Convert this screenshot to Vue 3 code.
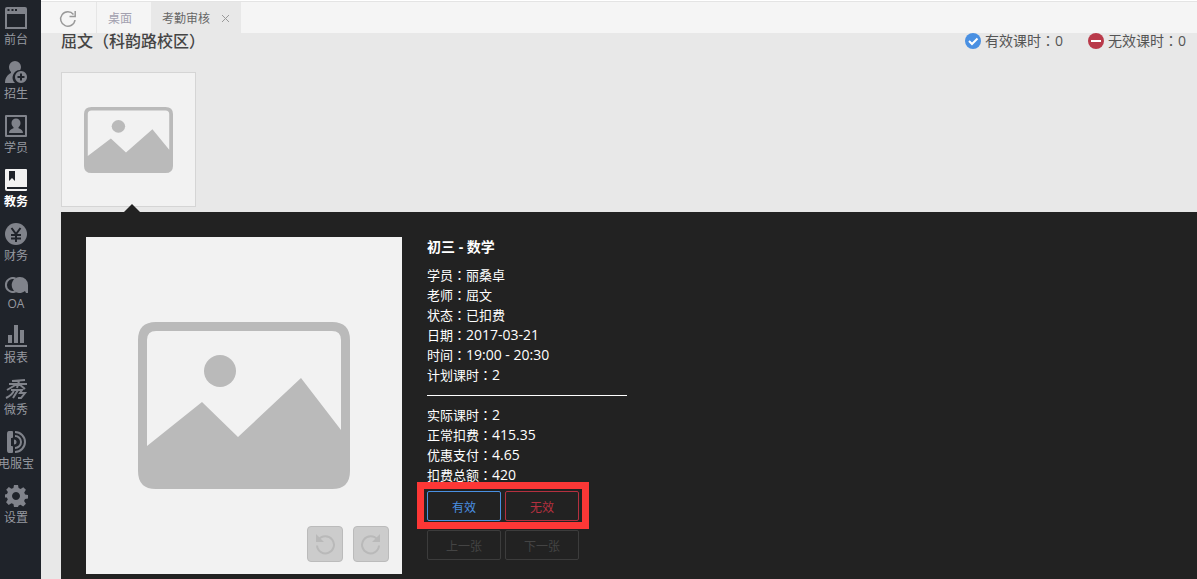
<script setup>
const nav = [
  { name: '前台', icon: 'desk', h: 22 },
  { name: '招生', icon: 'recruit', h: 22 },
  { name: '学员', icon: 'student', h: 22 },
  { name: '教务', icon: 'book', h: 22, active: true },
  { name: '财务', icon: 'money', h: 22 },
  { name: 'OA', icon: 'oa', h: 16 },
  { name: '报表', icon: 'chart', h: 22 },
  { name: '微秀', icon: 'show', h: 20 },
  { name: '电服宝', icon: 'phone', h: 22 },
  { name: '设置', icon: 'gear', h: 22 },
]
const lesson = [
  { label: '学员', value: '丽桑卓' },
  { label: '老师', value: '屈文' },
  { label: '状态', value: '已扣费' },
  { label: '日期', value: '2017-03-21', num: true },
  { label: '时间', value: '19:00 - 20:30', num: true },
  { label: '计划课时', value: '2', num: true },
]
const fees = [
  { label: '实际课时', value: '2', num: true },
  { label: '正常扣费', value: '415.35', num: true },
  { label: '优惠支付', value: '4.65', num: true },
  { label: '扣费总额', value: '420', num: true },
]
</script>

<template>
  <div class="app">
    <nav class="side">
      <a v-for="n in nav" :key="n.name" href="#" class="item" :class="{ active: n.active }">
        <svg width="24" :height="n.h" :viewBox="`0 0 24 ${n.h}`" fill="currentColor" aria-hidden="true">
          <template v-if="n.icon === 'desk'">
            <path fill-rule="evenodd" d="M3 0H21Q23 0 23 2V22H1V2Q1 0 3 0ZM3 7V20H21V7Z" />
            <path class="cut" d="M3.500 2h2v2h-2zM7.500 2h2v2h-2zM11 2h2v2h-2z" />
          </template>
          <template v-else-if="n.icon === 'recruit'">
            <path d="M11 0a6 6 0 0 1 6 6c0 1-.3 2-.8 3A7.500 7.500 0 0 0 11 22H1c0-5 2-8 6-10v-1C6 10 5 8 5 6a6 6 0 0 1 6-6z" />
            <path fill-rule="evenodd" d="M17 10a6 6 0 1 0 .01 0zM16 12.500h2V15h2.500v2H18v2.500h-2V17h-2.500v-2H16z" />
          </template>
          <template v-else-if="n.icon === 'student'">
            <path fill-rule="evenodd" d="M2 0H22Q23 0 23 1V21Q23 22 22 22H2Q1 22 1 21V1Q1 0 2 0ZM3 2V20H21V2Z" />
            <path d="M12 3.500a4.500 4.500 0 0 1 4.500 4.500c0 2-1 3.500-2 4.200v1c2.500.8 4.500 2 4.500 4.800H5c0-2.800 2-4 4.500-4.800v-1c-1-.7-2-2.200-2-4.200A4.500 4.500 0 0 1 12 3.500z" />
          </template>
          <template v-else-if="n.icon === 'book'">
            <path fill-rule="evenodd" d="M2 0H22Q23 0 23 1V21Q23 22 22 22H3Q1 22 1 20V1Q1 0 2 0ZM5 2V12L8 9L11 12V2ZM3 18V20H23V18Z" />
          </template>
          <template v-else-if="n.icon === 'money'">
            <circle cx="12" cy="11" r="11" />
            <path class="line" d="M7.500 5l4.500 6 4.500-6M12 11v8M7 12h10M7 15.500h10" />
          </template>
          <template v-else-if="n.icon === 'oa'">
            <path fill="none" stroke="currentColor" stroke-width="2" d="M11.500 1.500A7 7 0 1 0 11.500 14.500" />
            <path d="M16 0a8 8 0 0 1 8 8v8h-2l-1-2A8 8 0 1 1 16 0z" />
          </template>
          <template v-else-if="n.icon === 'chart'">
            <path d="M4 10h4v8H4zM10 0h4v18h-4zM16 5h4v13h-4zM1 20h22v2H1z" />
          </template>
          <template v-else-if="n.icon === 'show'">
            <g fill="none" stroke="currentColor" stroke-width="2">
              <path d="M8 2L21 1M5 5H23M15 2L13 9M13 5L3 11M15 5L21 10M7 11H18L16 14H21L17 19H14M10 11C9 15 6 17 2 19M14 11L9 19" />
            </g>
          </template>
          <template v-else-if="n.icon === 'phone'">
            <path d="M5 0H8Q9 0 9 1V6Q9 7 8 7H7V15H8Q9 15 9 16V21Q9 22 8 22H5Q3 22 3 19V3Q3 0 5 0Z" />
            <g fill="none" stroke="currentColor" stroke-width="2">
              <path d="M11 1A10 10 0 0 1 11 21M11 5A6 6 0 0 1 11 17" />
            </g>
            <path d="M10 8.500a2.500 2.500 0 0 1 0 5z" />
          </template>
          <template v-else>
            <path fill-rule="evenodd" d="M10 0h4l.6 3 2 .9L19.300 2.200l2.600 2.600-1.700 2.600.9 2 2.900.6v3.500l-3 .6-.9 2 1.800 2.700-2.700 2.600-2.600-1.700-2 .9L14 22h-4l-.6-2.900-2-.9-2.700 1.700L2.100 17.200 3.800 14.600l-.9-2L1 12.500v-3l2-.6.9-2L2.200 4.700 4.800 2.100l2.600 1.700 2-.9zM12 7a4 4 0 1 0 .01 0z" />
          </template>
        </svg>
        <span>{{ n.name }}</span>
      </a>
    </nav>

    <div class="content">
      <div class="tabs">
        <button class="refresh" aria-label="刷新">
          <svg width="18" height="18" viewBox="0 0 18 18" fill="none" stroke="currentColor" stroke-width="1.500">
            <path d="M14.500 4.500A7.200 7.200 0 1 0 16 10M16.200 1V6.500H10.500" />
          </svg>
        </button>
        <a href="#" class="tab">桌面</a>
        <div class="tab current">
          <a href="#">考勤审核</a>
          <button class="close" aria-label="关闭">
            <svg width="9" height="9" viewBox="0 0 9 9" stroke="currentColor"><path d="M1 1l7 7M8 1L1 8" /></svg>
          </button>
        </div>
      </div>

      <main>
        <header class="head">
          <h1>屈文（科韵路校区）</h1>
          <div class="stat">
            <svg width="16" height="16" viewBox="0 0 16 16" aria-hidden="true">
              <circle cx="8" cy="8" r="8" fill="#4a90e2" />
              <path d="M4 8l3 3 5.500-5.500" fill="none" stroke="#fff" stroke-width="2" />
            </svg>
            <span>有效课时<i>：</i>0</span>
          </div>
          <div class="stat">
            <svg width="16" height="16" viewBox="0 0 16 16" aria-hidden="true">
              <circle cx="8" cy="8" r="8" fill="#b93a4a" />
              <path d="M3 8h10" stroke="#fff" stroke-width="2" />
            </svg>
            <span>无效课时<i>：</i>0</span>
          </div>
        </header>

        <button class="thumb" aria-label="照片">
          <svg width="89" height="66" viewBox="0 0 212 167" preserveAspectRatio="none">
            <path fill-rule="evenodd" d="M18 0H194Q212 0 212 18V149Q212 167 194 167H18Q0 167 0 149V18Q0 0 18 0ZM18 9Q9 9 9 18V124L64 80L100 115L163 56L203 108V18Q203 9 194 9Z" />
            <ellipse cx="82" cy="49" rx="16" ry="16" />
          </svg>
        </button>

        <section class="panel">
          <div class="photo">
            <svg width="212" height="167" viewBox="0 0 212 167">
              <path fill-rule="evenodd" d="M18 0H194Q212 0 212 18V149Q212 167 194 167H18Q0 167 0 149V18Q0 0 18 0ZM18 9Q9 9 9 18V124L64 80L100 115L163 56L203 108V18Q203 9 194 9Z" />
              <circle cx="82" cy="49" r="16" />
            </svg>
            <div class="tools">
              <button aria-label="向左旋转">
                <svg width="20" height="22" viewBox="0 0 20 22">
                  <path d="M3.500 7A8.500 8.500 0 1 1 2 12.500" fill="none" stroke="#b9b9b9" stroke-width="2" />
                  <path d="M1 1V9H9Z" fill="#b9b9b9" />
                </svg>
              </button>
              <button aria-label="向右旋转">
                <svg width="20" height="22" viewBox="0 0 20 22">
                  <path d="M16.500 7A8.500 8.500 0 1 0 18 12.500" fill="none" stroke="#b9b9b9" stroke-width="2" />
                  <path d="M19 1V9H11Z" fill="#b9b9b9" />
                </svg>
              </button>
            </div>
          </div>

          <div class="info">
            <h2>初三 - 数学</h2>
            <p v-for="r in lesson" :key="r.label">{{ r.label }}<i>：</i><span :class="{ num: r.num }">{{ r.value }}</span></p>
            <hr />
            <p v-for="r in fees" :key="r.label">{{ r.label }}<i>：</i><span :class="{ num: r.num }">{{ r.value }}</span></p>
            <div class="row marked">
              <button class="valid">有效</button>
              <button class="invalid">无效</button>
            </div>
            <div class="row">
              <button disabled>上一张</button>
              <button disabled>下一张</button>
            </div>
          </div>
        </section>
      </main>
    </div>
  </div>
</template>

<style>
body {
  margin: 0;
}
</style>

<style scoped>
.app {
  display: flex;
  height: 100vh;
  overflow: hidden;
  background: #e8e8e8;
  font: 12px/20px "Open Sans", "Noto Sans CJK SC", sans-serif;
}
button {
  font: inherit;
  padding: 0;
  border: 0;
  background: none;
  color: inherit;
}
a {
  color: inherit;
  text-decoration: none;
}
svg {
  display: block;
}
i {
  font-style: normal;
  font-family: "Noto Sans CJK JP", sans-serif;
}
.side {
  flex: none;
  box-sizing: border-box;
  width: 41px;
  padding: 7px 9px 0 0;
  background: #1f232a;
  color: #80838b;
}
.item {
  display: flex;
  flex-direction: column;
  align-items: center;
  gap: 1px;
  margin-bottom: 11px;
  white-space: nowrap;
}
.item span {
  color: #9699a0;
}
.item.active {
  color: #f2f2f2;
}
.item.active span {
  color: #fff;
  font-weight: 700;
}
.cut {
  fill: #1f232a;
}
.line {
  fill: none;
  stroke: #1f232a;
  stroke-width: 2;
}
.content {
  flex: 1;
  min-width: 0;
  display: flex;
  flex-direction: column;
}
.tabs {
  display: flex;
  flex: 0 0 32px;
  box-sizing: border-box;
  margin-top: 1px;
  border-top: 1px solid #e4e4e4;
  background: #f5f5f5;
  box-shadow: 0 -1px #fff;
  color: #999;
}
.refresh {
  width: 56px;
  padding: 3px 0 0 18px;
  border-right: 1px solid #e6e6e6;
  color: #999;
}
.tab {
  display: flex;
  align-items: center;
  padding: 2px 11px 0;
  color: #a3a1b0;
}
.tab.current {
  gap: 11px;
  margin-left: 8px;
  background: #e8e8e8;
  color: #666;
}
.close {
  color: #999;
}
main {
  flex: 1;
  min-height: 0;
  display: flex;
  flex-direction: column;
  align-items: flex-start;
  padding-left: 20px;
}
.head {
  align-self: stretch;
  flex: none;
  display: flex;
  align-items: center;
  gap: 25px;
  height: 16px;
  margin-bottom: 23px;
  padding-right: 11px;
  color: #555;
  font-size: 14px;
}
h1 {
  flex: 1;
  margin: 0;
  font-size: 16px;
  line-height: 20px;
  font-weight: 500;
  color: #444;
}
.stat {
  display: flex;
  align-items: center;
  gap: 4px;
}
.stat span {
  line-height: 16px;
  padding-bottom: 2px;
}
.thumb {
  flex: none;
  display: grid;
  place-items: center;
  box-sizing: border-box;
  width: 135px;
  height: 135px;
  border: 1px solid #d5d5d5;
  background: #f2f2f2;
  fill: #bababa;
}
.panel {
  position: relative;
  align-self: stretch;
  flex: 1 0 auto;
  display: flex;
  align-items: flex-start;
  gap: 25px;
  margin-top: 5px;
  padding: 25px;
  background: #222;
  color: #fff;
  font-size: 13px;
}
.panel::before {
  content: "";
  position: absolute;
  left: 63px;
  top: -8px;
  border: 8px solid transparent;
  border-top: 0;
  border-bottom-color: #222;
}
.photo {
  position: relative;
  flex: none;
  display: grid;
  place-items: center;
  width: 316px;
  height: 337px;
  background: #f2f2f2;
  fill: #bababa;
}
.tools {
  position: absolute;
  right: 13px;
  bottom: 12px;
  display: flex;
  gap: 10px;
}
.tools button {
  display: grid;
  place-items: center;
  width: 36px;
  height: 36px;
  border: 1px solid #bbb;
  border-radius: 4px;
  background: #ccc;
}
h2 {
  margin: 0 0 8px;
  font-size: 14px;
  line-height: 20px;
}
p {
  height: 20px;
  margin: 0;
}
.num {
  font-size: 14px;
}
hr {
  width: 200px;
  height: 1px;
  margin: 10px 0 9px;
  border: 0;
  background: #fff;
}
.row {
  position: relative;
  display: flex;
  gap: 4px;
  width: max-content;
  margin-top: 9px;
  font-size: 12px;
}
.row button {
  box-sizing: border-box;
  width: 74px;
  height: 30px;
  padding-top: 4px;
  border: 1px solid #3c3c3c;
  border-radius: 2px;
  color: #444;
}
.row .valid {
  border-color: #4a90e2;
  color: #4a90e2;
}
.row .invalid {
  border-color: #b5303f;
  color: #b5303f;
}
.row.marked {
  margin-top: 6px;
}
.marked::after {
  content: "";
  position: absolute;
  inset: -9px -10px -8px;
  border: 7px solid #fd3736;
  pointer-events: none;
}
</style>
